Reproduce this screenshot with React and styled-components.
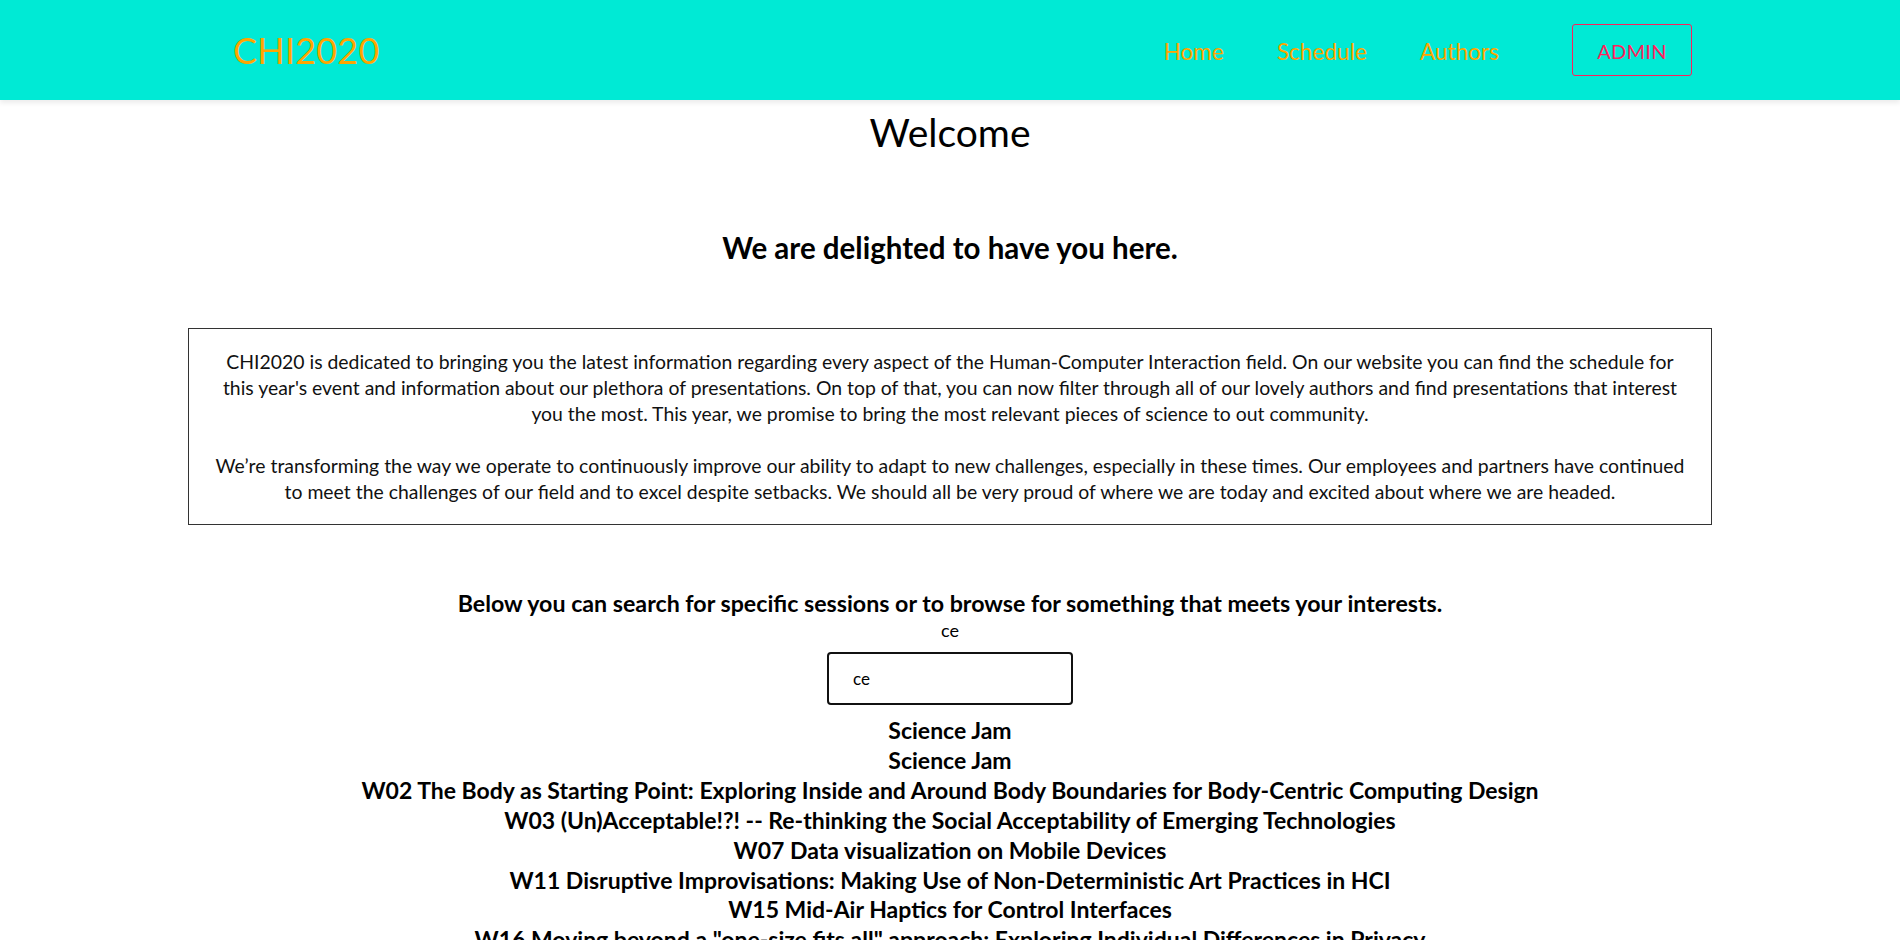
import React, { useState } from "react";
import styled, { createGlobalStyle } from "styled-components";

const GlobalStyle = createGlobalStyle`
  html, body {
    margin: 0;
    padding: 0;
    background: #ffffff;
  }
  body {
    font-family: Lato, "Open Sans", sans-serif;
    color: #000000;
  }
  * { box-sizing: border-box; }
`;

const Header = styled.header`
  height: 100px;
  background: #00ead5;
  box-shadow: 0 3px 5px rgba(0, 0, 0, 0.08);
  display: flex;
  align-items: center;
  justify-content: space-between;
  padding: 0 208px 0 233px;
  position: relative;
  z-index: 1;
`;

const Logo = styled.div`
  font-size: 36px;
  line-height: 40px;
  color: #ffa500;
  letter-spacing: 0.2px;
`;

const Nav = styled.nav`
  display: flex;
  align-items: center;
  gap: 53px;
`;

const NavLink = styled.a`
  font-size: 22.6px;
  line-height: 28px;
  margin-top: 3px;
  color: #ffa500;
  text-decoration: none;
  cursor: pointer;
`;

const AdminButton = styled.button`
  width: 120px;
  height: 52px;
  margin-left: 20px;
  padding-top: 2px;
  border: 1px solid #ff1f5c;
  border-radius: 3px;
  background: transparent;
  color: #ff1f5c;
  font-family: Lato, sans-serif;
  font-size: 20px;
  letter-spacing: 0.3px;
  cursor: pointer;
`;

const Main = styled.main`
  display: flex;
  flex-direction: column;
  align-items: center;
  text-align: center;
`;

const Title = styled.h1`
  margin: 8px 0 0;
  font-size: 39px;
  line-height: 48px;
  font-weight: 400;
`;

const Subtitle = styled.h2`
  margin: 74px 0 0;
  font-size: 29.5px;
  line-height: 36px;
  font-weight: 700;
`;

const IntroBox = styled.section`
  width: calc(80% + 4px);
  margin-top: 62px;
  border: 1px solid #333333;
  padding: 20px 16px 19px;
`;

const Paragraph = styled.p`
  margin: ${(p) => (p.$first ? "0" : "26px 0 0")};
  font-size: 19.4px;
  line-height: 26px;
  color: #111111;
  white-space: nowrap;
`;

const SearchHeading = styled.h3`
  margin: 64px 0 0;
  font-size: 23.2px;
  line-height: 28px;
  font-weight: 700;
`;

const EchoLabel = styled.div`
  margin-top: 2px;
  font-size: 18px;
  line-height: 22px;
`;

const SearchInput = styled.input`
  margin-top: 11px;
  width: 246px;
  height: 53px;
  border: 2px solid #111111;
  border-radius: 4px;
  padding: 0 24px;
  font-family: Lato, sans-serif;
  font-size: 17px;
  color: #000000;
  outline: none;
`;

const ResultList = styled.ul`
  list-style: none;
  margin: 11px 0 0;
  padding: 0;
`;

const ResultItem = styled.li`
  font-size: 23px;
  line-height: 29.9px;
  font-weight: 700;
  white-space: nowrap;
`;

const sessions = [
  "Science Jam",
  "Science Jam",
  "W02 The Body as Starting Point: Exploring Inside and Around Body Boundaries for Body-Centric Computing Design",
  "W03 (Un)Acceptable!?! -- Re-thinking the Social Acceptability of Emerging Technologies",
  "W07 Data visualization on Mobile Devices",
  "W11 Disruptive Improvisations: Making Use of Non-Deterministic Art Practices in HCI",
  "W15 Mid-Air Haptics for Control Interfaces",
  "W16 Moving beyond a \"one-size fits all\" approach: Exploring Individual Differences in Privacy",
];

export default function App() {
  const [query, setQuery] = useState("ce");
  return (
    <>
      <GlobalStyle />
      <Header>
        <Logo>CHI2020</Logo>
        <Nav>
          <NavLink>Home</NavLink>
          <NavLink>Schedule</NavLink>
          <NavLink>Authors</NavLink>
          <AdminButton>ADMIN</AdminButton>
        </Nav>
      </Header>
      <Main>
        <Title>Welcome</Title>
        <Subtitle>We are delighted to have you here.</Subtitle>
        <IntroBox>
          <Paragraph $first>
            CHI2020 is dedicated to bringing you the latest information regarding every aspect of the Human-Computer Interaction field. On our website you can find the schedule for
            <br />
            this year's event and information about our plethora of presentations. On top of that, you can now filter through all of our lovely authors and find presentations that interest
            <br />
            you the most. This year, we promise to bring the most relevant pieces of science to out community.
          </Paragraph>
          <Paragraph>
            We’re transforming the way we operate to continuously improve our ability to adapt to new challenges, especially in these times. Our employees and partners have continued
            <br />
            to meet the challenges of our field and to excel despite setbacks. We should all be very proud of where we are today and excited about where we are headed.
          </Paragraph>
        </IntroBox>
        <SearchHeading>Below you can search for specific sessions or to browse for something that meets your interests.</SearchHeading>
        <EchoLabel>{query}</EchoLabel>
        <SearchInput value={query} onChange={(e) => setQuery(e.target.value)} />
        <ResultList>
          {sessions.map((s, i) => (
            <ResultItem key={i}>{s}</ResultItem>
          ))}
        </ResultList>
      </Main>
    </>
  );
}
